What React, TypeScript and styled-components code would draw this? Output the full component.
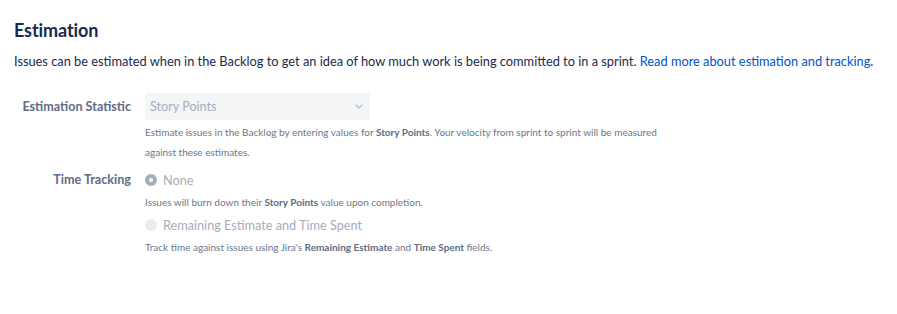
import React from "react";
import styled, { createGlobalStyle } from "styled-components";

const GlobalStyle = createGlobalStyle`
    body {
        margin: 0;
        background: #ffffff;
        font-family: Lato, "Noto Sans", sans-serif;
        color: #172b4d;
    }
`

interface RadioProps {
    checked?: boolean
}

interface LabelProps {
    top: number
}

interface OptionProps {
    spaced?: boolean
}

const App = () => {
    return (
        <>
        <GlobalStyle />
        <Page>
            <Title>Estimation</Title>
            <Intro>
                Issues can be estimated when in the Backlog to get an idea of how much work is being committed to in a sprint.{" "}
                <Link href="#">Read more about estimation and tracking</Link>.
            </Intro>
            <Form>
                <Label top={4}>Estimation Statistic</Label>
                <Field>
                    <Select>
                        <span>Story Points</span>
                        <Chevron viewBox="0 0 8 5">
                            <path d="M1 1 L4 4 L7 1" fill="none" stroke="#c1c7d0" strokeWidth="1.6" strokeLinecap="round" strokeLinejoin="round" />
                        </Chevron>
                    </Select>
                    <Help>
                        Estimate issues in the Backlog by entering values for <b>Story Points</b>. Your velocity from sprint to sprint will be measured
                        <br />against these estimates.
                    </Help>
                </Field>

                <Label top={0}>Time Tracking</Label>
                <Field>
                    <Option>
                        <Radio checked />
                        <OptionText>None</OptionText>
                    </Option>
                    <Help>Issues will burn down their <b>Story Points</b> value upon completion.</Help>
                    <Option spaced>
                        <Radio />
                        <OptionText>Remaining Estimate and Time Spent</OptionText>
                    </Option>
                    <Help>Track time against issues using Jira's <b>Remaining Estimate</b> and <b>Time Spent</b> fields.</Help>
                </Field>
            </Form>
        </Page>
        </>
    )
}

const Page = styled.div`
    padding: 18px 14px 0 14px;
`

const Title = styled.h2`
    margin: 0;
    font-size: 18px;
    font-weight: 700;
    line-height: 24px;
    letter-spacing: -0.1px;
    color: #172b4d;
`

const Intro = styled.p`
    margin: 9px 0 0 0;
    font-size: 12.8px;
    line-height: 20px;
    color: #172b4d;
    white-space: nowrap;
`

const Link = styled.a`
    color: #0052cc;
    text-decoration: none;
`

const Form = styled.div`
    display: grid;
    grid-template-columns: 117px 1fr;
    column-gap: 14px;
    row-gap: 8px;
    margin-top: 22px;
`

const Label = styled.div<LabelProps>`
    text-align: right;
    white-space: nowrap;
    font-size: 12.6px;
    font-weight: 700;
    line-height: 20px;
    padding-top: ${props => props.top}px;
    color: #5e6c84;
`

const Field = styled.div`
    display: flex;
    flex-direction: column;
`

const Select = styled.div`
    display: flex;
    align-items: center;
    justify-content: space-between;
    width: 225px;
    height: 27px;
    box-sizing: border-box;
    padding: 0 7px 0 5px;
    border-radius: 3px;
    background: #f4f5f7;
    font-size: 12.6px;
    color: #a5adba;
`

const Chevron = styled.svg`
    width: 8px;
    height: 5px;
`

const Help = styled.div`
    font-size: 10px;
    line-height: 20px;
    color: #6b778c;
    margin-top: 2px;

    b {
        font-weight: 700;
        color: #5e6c84;
    }
`

const Option = styled.div<OptionProps>`
    display: flex;
    align-items: center;
    gap: 6px;
    height: 20px;
    margin-top: ${props => props.spaced ? 3 : 0}px;
`

const Radio = styled.span<RadioProps>`
    width: 12px;
    height: 12px;
    border-radius: 50%;
    box-sizing: border-box;
    background: ${props => props.checked ? "#ffffff" : "#ebecf0"};
    border: ${props => props.checked ? "4px solid #a5adba" : "none"};
`

const OptionText = styled.span`
    font-size: 12.7px;
    color: #a5adba;
`

export default App
